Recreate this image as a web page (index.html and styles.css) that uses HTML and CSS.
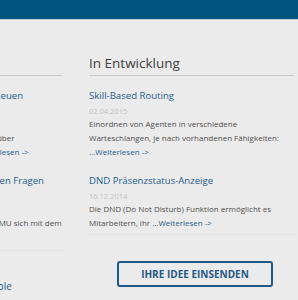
FILE: index.html
```html
<!DOCTYPE html>
<html lang="de">
<head>
    <meta charset="UTF-8">
    <meta name="viewport" content="width=device-width, initial-scale=1.0">
    <title>Roadmap</title>
    <link rel="stylesheet" href="styles.css">
</head>
<body>
    <div class="topbar"></div>

    <div class="page">
        <!-- linke Spalte: bereits umgesetzt -->
        <section class="col">
            <h2 class="col-title">Neu</h2>
            <div class="post">
                <a class="post-title" href="#">Anrufverteilung in mehreren Queuen</a>
                <div class="post-date">12.05.2015</div>
                <p class="post-text">Agenten<br>können mehrere Queuen gleichzeitig über<br>die Oberfläche gut verwalten. <a class="more" href="#">...Weiterlesen -&gt;</a></p>
            </div>
            <div class="post">
                <a class="post-title" href="#">Die Antworten zu häufig gestellten Fragen</a>
                <div class="post-date">20.03.2015</div>
                <p class="post-text">Hier<br>erfahren Sie, wie die IP-PBX und die MMU sich mit dem</p>
            </div>
            <div class="col-foot col-foot-left">
                <a class="foot-link" href="#">Alle SIP-Telefone sind kompatible</a>
            </div>
        </section>

        <!-- rechte Spalte: in Entwicklung -->
        <section class="col">
            <h2 class="col-title">In Entwicklung</h2>
            <div class="post">
                <a class="post-title" href="#">Skill-Based Routing</a>
                <div class="post-date">02.04.2015</div>
                <p class="post-text">Einordnen von Agenten in verschiedene Warteschlangen, je nach vorhandenen Fähigkeiten: <a class="more" href="#">...Weiterlesen -&gt;</a></p>
            </div>
            <div class="post">
                <a class="post-title" href="#">DND Präsenzstatus-Anzeige</a>
                <div class="post-date">16.12.2014</div>
                <p class="post-text">Die DND (Do Not Disturb) Funktion ermöglicht es Mitarbeitern, ihr <a class="more" href="#">...Weiterlesen -&gt;</a></p>
            </div>
            <div class="col-foot">
                <a class="idea-btn" href="#">IHRE IDEE EINSENDEN</a>
            </div>
        </section>
    </div>
</body>
</html>
```

FILE: styles.css
```css
html, body{
    margin: 0;
    overflow: hidden;
}
body{
    background-color: #ebebeb;
    font-family: "Open Sans", "DejaVu Sans", sans-serif;
    color: #555555;
}
a{ text-decoration: none; }

.topbar{ /* blauer Balken oben */
    height: 19px;
    background-color: #00557f;
    border-bottom: 1px solid #c3ccd3;
}

.page{
    display: flex;
    gap: 27px;
    margin-left: -143px;
    padding-top: 34px;
}
.col{ width: 205px; flex: none; }

.col-title{
    margin: 0 0 13px;
    font-size: 13.5px; font-weight: 400;
    line-height: 18px; color: #404040;
    padding-bottom: 3px;
    border-bottom: 1px solid #cacaca;
}

.post{ margin-bottom: 15px; }
.post-title{
    display: block;
    font-size: 9.6px; line-height: 14px;
    color: #1c5d8d;
}
.post-date{
    font-size: 7.5px; line-height: 14px;
    padding-top: 1px; margin-bottom: -1px;
    color: #c2c2c2;
}
.post-text{
    margin: 0;
    font-size: 8px; line-height: 14px;
    color: #4f4f4f;
}
.more{ color: #1c5d8d; }

.col-foot{
    margin-top: -11px;
    border-top: 1px solid #e2e2e2;
    padding-top: 26px;
}
.col-foot-left{ margin-top: 20px; padding-top: 22px; }
.foot-link{
    font-size: 10px; line-height: 14px;
    color: #1c5d8d;
}

.idea-btn{ /* Button unten rechts */
    display: flex; align-items: center; justify-content: center;
    box-sizing: border-box;
    width: 156px; height: 26px;
    margin-left: 28px;
    border: 2px solid #1f5a86;
    border-radius: 3px;
    font-size: 10px; font-weight: 700;
    color: #1f5a86;
}
```
